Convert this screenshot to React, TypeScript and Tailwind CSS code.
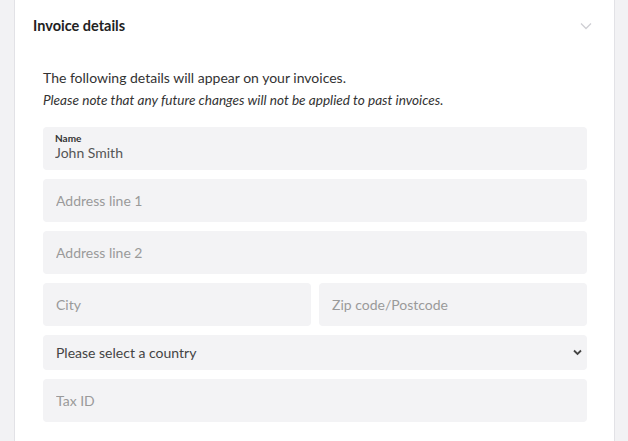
import React from 'react';

const fieldBase =
  'w-full rounded-[4px] bg-[#f3f3f5] px-[13px] text-[14px] text-[#444] outline-none placeholder:text-[#9a9a9a]';

const App: React.FC = () => {
  return (
    <div className="min-h-screen bg-[#f2f2f4] font-['Lato',sans-serif] pl-[14px] pr-[13px]">
      <div className="bg-white border-x border-[#e2e2e6] min-h-[441px]">
        {/* header */}
        <div className="flex items-center justify-between pl-[18px] pr-[22px] h-[51px]">
          <h2 className="text-[14.5px] font-bold text-[#222]">Invoice details</h2>
          <svg width="12" height="8" viewBox="0 0 12 8" fill="none">
            <path d="M1 1.5l5 5 5-5" stroke="#cfcfd4" strokeWidth="1.3" />
          </svg>
        </div>

        <div className="pl-[28px] pr-[27px] pt-[16px]">
          <p className="text-[14px] text-[#333] leading-[22px]">
            The following details will appear on your invoices.
          </p>
          <p className="text-[13.6px] italic text-[#333] leading-[22px]">
            Please note that any future changes will not be applied to past invoices.
          </p>

          <div className="mt-[16px] flex flex-col gap-[9px]">
            <div className="rounded-[4px] bg-[#f3f3f5] h-[43px] px-[12px] pt-[5px]">
              <div className="text-[10px] font-bold text-[#333] leading-[12px]">Name</div>
              <input
                className="block w-full h-[18px] bg-transparent text-[14px] text-[#555] leading-[18px] outline-none"
                defaultValue="John Smith"
              />
            </div>
            <input className={`${fieldBase} h-[43px]`} placeholder="Address line 1" />
            <input className={`${fieldBase} h-[43px]`} placeholder="Address line 2" />
            <div className="grid grid-cols-2 gap-[8px]">
              <input className={`${fieldBase} h-[43px]`} placeholder="City" />
              <input className={`${fieldBase} h-[43px]`} placeholder="Zip code/Postcode" />
            </div>
            <div className="relative">
              <select className={`${fieldBase} h-[35px] appearance-none text-[#444]`} defaultValue="">
                <option value="">Please select a country</option>
              </select>
              <svg
                className="absolute right-[5px] top-[14px] pointer-events-none"
                width="9"
                height="7"
                viewBox="0 0 9 7"
                fill="none"
              >
                <path d="M1 1.5l3.5 3.5 3.5-3.5" stroke="#444" strokeWidth="1.8" />
              </svg>
            </div>
            <input className={`${fieldBase} h-[43px]`} placeholder="Tax ID" />
          </div>
        </div>
      </div>
    </div>
  );
};

export default App;
